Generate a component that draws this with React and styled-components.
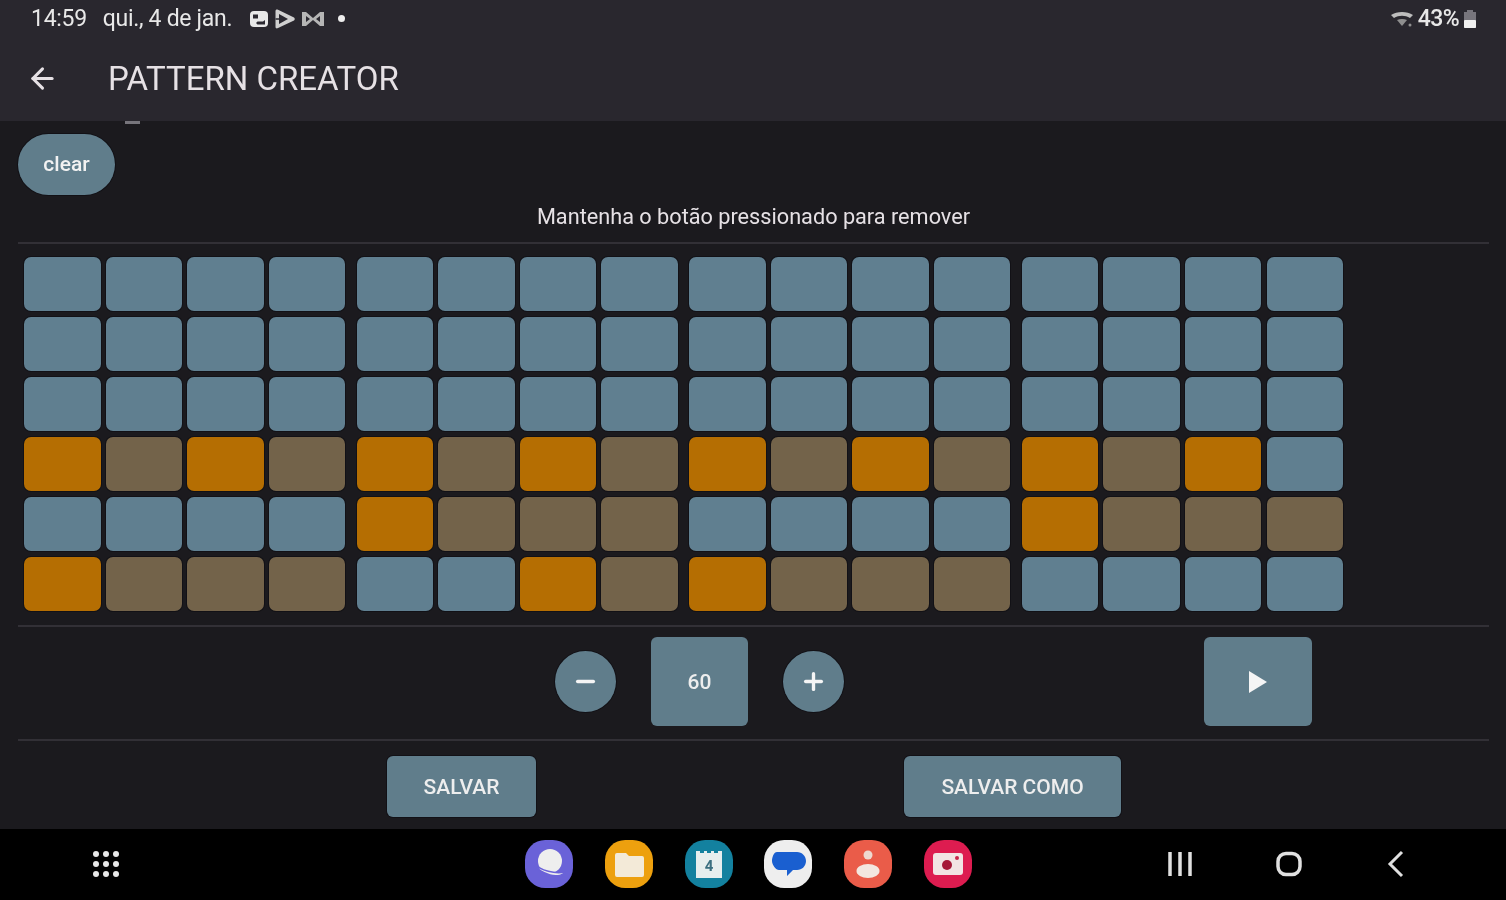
import React from "react";
import styled, { createGlobalStyle } from "styled-components";
import { ArrowLeft, Minus, Plus } from "lucide-react";

const ROWS = [
  "____ ____ ____ ____",
  "____ ____ ____ ____",
  "____ ____ ____ ____",
  "OBOB OBOB OBOB OBO_",
  "____ OBBB ____ OBBB",
  "OBBB __OB OBBB ____",
];

const GROUPS = [0, 1, 2, 3];

export default function App() {
  return (
    <Page>
      <GlobalStyle />
      <Header>
        <StatusBar>
          <Time>14:59</Time>
          <DateText>qui., 4 de jan.</DateText>
          <StatusIcons>
            <svg width="20" height="18" viewBox="0 0 20 18">
              <rect x="1" y="1" width="18" height="16" rx="4" fill="#e8e8e8" />
              <path d="M4 13h3l1.500 1.500H16V10l-2 1.500H8.500L7 13z" fill="#2a2830" />
              <rect x="4" y="4.500" width="5" height="4" fill="#2a2830" />
            </svg>
            <svg width="22" height="22" viewBox="0 0 22 22">
              <path d="M3 1.500c-1 0-1.500.7-1.500 1.500v16c0 1 1 1.800 2 1.300L20 12.500c1-.6 1-2.400 0-3L3.500 1.600z" fill="#d0d0d0" />
              <path d="M5 6l9 5-9 5z" fill="#2a2830" />
              <path d="M1.500 11H9" stroke="#2a2830" strokeWidth="1.500" />
            </svg>
            <svg width="24" height="18" viewBox="0 0 24 18">
              <path d="M1 2h4l7 6 7-6h4v14h-4l-7-6-7 6H1z" fill="#b5b5b5" />
              <path d="M5 6l4 3-4 3zM19 6l-4 3 4 3z" fill="#2a2830" />
            </svg>
            <Dot />
          </StatusIcons>
          <StatusRight>
            <svg width="24" height="18" viewBox="0 0 24 18">
              <path d="M1 5c6-4 16-4 22 0l-3 3c-5-3-11-3-16 0z" fill="#bdbdbd" />
              <path d="M7 10c3-1.500 7-1.500 10 0l-5 6z" fill="#8f8f8f" />
              <circle cx="20" cy="15" r="1.500" fill="#8f8f8f" />
            </svg>
            <Percent>43%</Percent>
            <svg width="14" height="20" viewBox="0 0 14 20">
              <path d="M4 1h6v2h3v16H1V3h3z" fill="#77757c" />
              <rect x="1" y="11" width="12" height="8" rx="1" fill="#f0f0f0" />
            </svg>
          </StatusRight>
        </StatusBar>
        <Toolbar>
          <ArrowLeft size={33} color="#e6e1e5" strokeWidth={2.2} />
          <Title>PATTERN CREATOR</Title>
        </Toolbar>
      </Header>

      <Main>
        <ScrollTick />
        <ClearButton>clear</ClearButton>
        <Hint>Mantenha o botão pressionado para remover</Hint>
        <Divider />
        <Board>
          {GROUPS.map((g) => (
            <Group key={g}>
              {ROWS.map((row, r) =>
                row
                  .split(" ")
                  [g].split("")
                  .map((kind, c) => <Cell key={`${r}-${c}`} $kind={kind} />)
              )}
            </Group>
          ))}
        </Board>
        <Divider />
        <Controls>
          <Tempo>
            <RoundButton>
              <Minus size={27} strokeWidth={3} />
            </RoundButton>
            <TempoValue>60</TempoValue>
            <RoundButton>
              <Plus size={27} strokeWidth={3} />
            </RoundButton>
          </Tempo>
          <PlayButton>
            <svg width="20" height="22" viewBox="0 0 20 22">
              <path d="M1 0l18 11L1 22z" fill="#f5f5f5" />
            </svg>
          </PlayButton>
        </Controls>
        <Divider />
        <Actions>
          <SaveButton $width={149}>SALVAR</SaveButton>
          <SaveButton $width={217}>SALVAR COMO</SaveButton>
        </Actions>
      </Main>

      <NavBar>
        <AppsIcon>
          {Array.from({ length: 9 }).map((_, i) => (
            <AppsDot key={i} />
          ))}
        </AppsIcon>
        <Dock>
          <AppIcon $bg="#6a62d8">
            <svg width="48" height="48" viewBox="0 0 48 48">
              <circle cx="25" cy="21" r="12" fill="#eeeeee" />
              <path d="M8 23c8 8 22 11 32 9-1 3-8 5-15 3S11 28 8 23z" fill="#eeeeee" stroke="#6a62d8" strokeWidth="1.500" />
            </svg>
          </AppIcon>
          <AppIcon $bg="#eda00e">
            <svg width="48" height="48" viewBox="0 0 48 48">
              <path d="M10 15a2 2 0 0 1 2-2h9l3 3h13a2 2 0 0 1 2 2v17a2 2 0 0 1-2 2H12a2 2 0 0 1-2-2z" fill="#f3ead8" />
            </svg>
          </AppIcon>
          <AppIcon $bg="#13819f">
            <svg width="48" height="48" viewBox="0 0 48 48">
              <path d="M11 11h4v2h4v-2h3v2h4v-2h3v2h4v-2h4v27H11z" fill="#e6eeee" />
              <text x="24" y="31" textAnchor="middle" fontFamily="Roboto, sans-serif" fontWeight="700" fontSize="15" fill="#3b6f80">4</text>
            </svg>
          </AppIcon>
          <AppIcon $bg="#eeeeee">
            <svg width="48" height="48" viewBox="0 0 48 48">
              <path d="M14 12h20c5 0 9 4 9 9s-4 9-9 9h-4l-6 6v-6h-8c-3 0-7-5-7-9s2-9 5-9z" fill="#1a5fd0" transform="translate(-1 0)" />
            </svg>
          </AppIcon>
          <AppIcon $bg="#ea5c49">
            <svg width="48" height="48" viewBox="0 0 48 48">
              <circle cx="24" cy="15" r="4.500" fill="#eed9d0" />
              <ellipse cx="24" cy="31" rx="11.500" ry="7" fill="#f3e7df" />
            </svg>
          </AppIcon>
          <AppIcon $bg="#dd1c50">
            <svg width="48" height="48" viewBox="0 0 48 48">
              <rect x="9" y="13" width="30" height="22" rx="3" fill="#f2e4e4" />
              <circle cx="23" cy="25" r="5" fill="#a51838" />
              <circle cx="33" cy="18" r="2" fill="#c8254a" />
            </svg>
          </AppIcon>
        </Dock>
        <SystemKeys>
          <svg width="26" height="26" viewBox="0 0 26 26" fill="none" stroke="#e0e0e0" strokeWidth="3.500">
            <path d="M3 1v24M13 1v24M23 1v24" />
          </svg>
          <svg width="26" height="26" viewBox="0 0 26 26" fill="none" stroke="#e0e0e0" strokeWidth="3.500">
            <rect x="2" y="2.500" width="22" height="21" rx="8" />
          </svg>
          <svg width="20" height="28" viewBox="0 0 20 28" fill="none" stroke="#e0e0e0" strokeWidth="3">
            <path d="M16 2L4 14l12 12" />
          </svg>
        </SystemKeys>
      </NavBar>
    </Page>
  );
}

const GlobalStyle = createGlobalStyle`
  html, body {
    margin: 0;
    background: #1b1a1e;
  }
  * {
    box-sizing: border-box;
  }
`;

const Page = styled.div`
  position: relative;
  width: 1506px;
  height: 900px;
  overflow: hidden;
  display: flex;
  flex-direction: column;
  background: #1b1a1e;
  color: #e6e1e5;
  font-family: Roboto, "Liberation Sans", sans-serif;
  filter: blur(0.5px);
`;

const Header = styled.header`
  height: 121px;
  background: #29272e;
`;

const StatusBar = styled.div`
  height: 37px;
  padding: 0 29px 0 31px;
  display: flex;
  align-items: center;
  color: #e8e8e8;
  font-size: 23px;
  letter-spacing: -0.3px;
`;

const Time = styled.span`
  margin-right: 16px;
`;

const DateText = styled.span`
  margin-right: 17px;
`;

const StatusIcons = styled.div`
  display: flex;
  align-items: center;
  gap: 5px;
`;

const Dot = styled.span`
  width: 7px;
  height: 7px;
  margin-left: 8px;
  border-radius: 50%;
  background: #eeeeee;
`;

const StatusRight = styled.div`
  margin-left: auto;
  display: flex;
  align-items: center;
  gap: 4px;
`;

const Percent = styled.span`
  font-weight: 500;
  letter-spacing: -0.6px;
`;

const Toolbar = styled.div`
  height: 84px;
  padding: 0 0 2px 26px;
  display: flex;
  align-items: center;
  gap: 49px;
`;

const Title = styled.h1`
  margin: 0;
  font-size: 33px;
  font-weight: 400;
  color: #e6e1e5;
`;

const Main = styled.main`
  position: relative;
  flex: 1;
  padding: 13px 17px 0 18px;
`;

const ScrollTick = styled.span`
  position: absolute;
  top: 0;
  left: 125px;
  width: 15px;
  height: 3px;
  background: #77757c;
`;

const ClearButton = styled.button`
  display: block;
  width: 97px;
  height: 61px;
  padding: 0 0 2px;
  border: none;
  border-radius: 31px;
  background: #607d8b;
  color: #f2f2f2;
  font-family: inherit;
  font-size: 21px;
  font-weight: 500;
  box-shadow: 0 0 0 1px #121116;
`;

const Hint = styled.p`
  margin: 8px 0 12px;
  height: 27px;
  line-height: 27px;
  text-align: center;
  font-size: 21.700px;
  color: #e6e1e5;
`;

const Divider = styled.hr`
  margin: 0;
  height: 2px;
  border: none;
  background: #323036;
`;

const Board = styled.div`
  margin: 13px 0 14px 6px;
  display: flex;
  gap: 11.300px;
`;

const CELL_COLORS = {
  _: "#607f90",
  O: "#b56e02",
  B: "#73634a",
};

const Group = styled.div`
  display: grid;
  grid-template-columns: repeat(4, 76.500px);
  grid-auto-rows: 54px;
  gap: 6px 5.100px;
`;

const Cell = styled.div`
  border-radius: 7px;
  background: ${(p) => CELL_COLORS[p.$kind]};
  box-shadow: 0 0 0 1px #121116;
`;

const Controls = styled.div`
  height: 112px;
  padding: 0 0 3px 537px;
  display: flex;
  align-items: center;
`;

const Tempo = styled.div`
  display: flex;
  align-items: center;
  gap: 35px;
`;

const RoundButton = styled.button`
  width: 61px;
  height: 61px;
  padding: 0;
  border: none;
  border-radius: 50%;
  display: flex;
  align-items: center;
  justify-content: center;
  background: #607d8b;
  color: #f5f5f5;
  box-shadow: 0 0 0 1px #121116;
`;

const TempoValue = styled.div`
  width: 97px;
  height: 89px;
  display: flex;
  align-items: center;
  justify-content: center;
  border-radius: 6px;
  background: #607d8b;
  color: #eeeeee;
  font-size: 21px;
  font-weight: 500;
`;

const PlayButton = styled.button`
  width: 108px;
  height: 89px;
  margin-left: 360px;
  padding: 0;
  border: none;
  border-radius: 6px;
  display: flex;
  align-items: center;
  justify-content: center;
  background: #607d8b;
`;

const Actions = styled.div`
  padding: 15px 0 0 369px;
  display: flex;
  gap: 368px;
`;

const SaveButton = styled.button`
  width: ${(p) => p.$width}px;
  height: 61px;
  padding: 0;
  border: none;
  border-radius: 6px;
  background: #607d8b;
  color: #eeeeee;
  font-family: inherit;
  font-size: 21px;
  font-weight: 500;
  box-shadow: 0 0 0 1px #121116;
`;

const NavBar = styled.nav`
  height: 71px;
  flex: none;
  background: #000000;
  display: flex;
  align-items: center;
  padding: 0 0 2px 93px;
`;

const AppsIcon = styled.div`
  display: grid;
  grid-template-columns: repeat(3, 6px);
  grid-auto-rows: 6px;
  gap: 4px;
`;

const AppsDot = styled.span`
  border-radius: 50%;
  background: #e8e8e8;
`;

const Dock = styled.div`
  margin-left: 406px;
  display: flex;
  gap: 31.800px;
`;

const AppIcon = styled.div`
  width: 48px;
  height: 48px;
  border-radius: 42%;
  overflow: hidden;
  background: ${(p) => p.$bg};
`;

const SystemKeys = styled.div`
  margin-left: 195px;
  display: flex;
  align-items: center;
  gap: 83.500px;
`;
